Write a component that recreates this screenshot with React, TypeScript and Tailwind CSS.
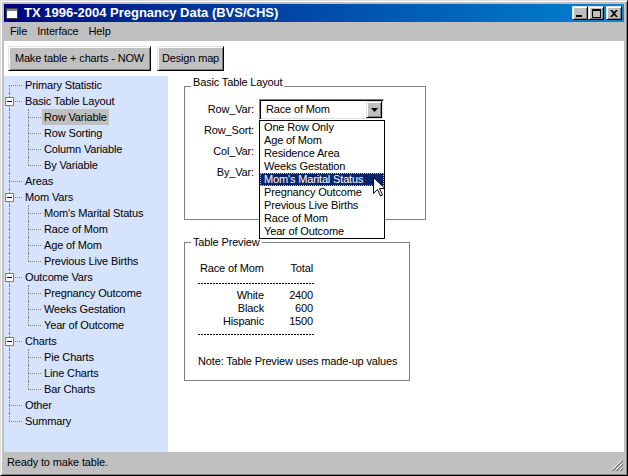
import React from 'react'

type TreeItem = {
  label: string
  level: 0 | 1
  open?: boolean
  last?: boolean
  selected?: boolean
}

const tree: TreeItem[] = [
  { label: 'Primary Statistic', level: 0 },
  { label: 'Basic Table Layout', level: 0, open: true },
  { label: 'Row Variable', level: 1, selected: true },
  { label: 'Row Sorting', level: 1 },
  { label: 'Column Variable', level: 1 },
  { label: 'By Variable', level: 1, last: true },
  { label: 'Areas', level: 0 },
  { label: 'Mom Vars', level: 0, open: true },
  { label: "Mom's Marital Status", level: 1 },
  { label: 'Race of Mom', level: 1 },
  { label: 'Age of Mom', level: 1 },
  { label: 'Previous Live Births', level: 1, last: true },
  { label: 'Outcome Vars', level: 0, open: true },
  { label: 'Pregnancy Outcome', level: 1 },
  { label: 'Weeks Gestation', level: 1 },
  { label: 'Year of Outcome', level: 1, last: true },
  { label: 'Charts', level: 0, open: true },
  { label: 'Pie Charts', level: 1 },
  { label: 'Line Charts', level: 1 },
  { label: 'Bar Charts', level: 1, last: true },
  { label: 'Other', level: 0 },
  { label: 'Summary', level: 0, last: true },
]

const listItems = [
  'One Row Only',
  'Age of Mom',
  'Residence Area',
  'Weeks Gestation',
  "Mom's Marital Status",
  'Pregnancy Outcome',
  'Previous Live Births',
  'Race of Mom',
  'Year of Outcome',
]

const preview = [
  { name: 'White', total: '2400' },
  { name: 'Black', total: '600' },
  { name: 'Hispanic', total: '1500' },
]

const raised =
  'border border-t-[#dfdfdf] border-l-[#dfdfdf] border-r-black border-b-black shadow-[inset_1px_1px_0_#fff,inset_-1px_-1px_0_#808080]'
const sunken =
  'border border-t-[#808080] border-l-[#808080] border-r-white border-b-white shadow-[inset_1px_1px_0_#000,inset_-1px_-1px_0_#dfdfdf]'

const dashed =
  'h-[1px] w-[117px] bg-[repeating-linear-gradient(to_right,#000_0_2px,transparent_2px_3px)]'

const Combo = ({ value }: { value: string }) => (
  <div className={`flex h-[21px] w-[125px] bg-white p-[1px] ${sunken}`}>
    <div className="flex-1 truncate pl-[5px] leading-[17px]">{value}</div>
    <div className={`flex h-[17px] w-[16px] items-center justify-center bg-[#c0c0c0] ${raised}`}>
      <svg width="7" height="4" viewBox="0 0 7 4">
        <path d="M0 0h7L3.5 4z" fill="#000" />
      </svg>
    </div>
  </div>
)

const TreeRow = ({ item, first }: { item: TreeItem; first: boolean }) => (
  <div className="flex h-[16px] items-stretch">
    <div className="relative w-[18px] shrink-0">
      {(item.level === 1 || !first) && (
        <div className="absolute top-0 left-[5px] h-[8px] border-l border-dotted border-[#808080]" />
      )}
      {(item.level === 1 || !item.last) && (
        <div className="absolute top-[8px] left-[5px] h-[8px] border-l border-dotted border-[#808080]" />
      )}
      {item.level === 0 && (
        <div className="absolute top-[8px] right-0 left-[5px] border-t border-dotted border-[#808080]" />
      )}
      {item.open && (
        <div className="absolute top-[4px] left-[1px] flex h-[9px] w-[9px] items-center justify-center border border-[#808080] bg-white">
          <div className="h-[1px] w-[5px] bg-black" />
        </div>
      )}
    </div>
    {item.level === 1 && (
      <div className="relative w-[19px] shrink-0">
        <div className="absolute top-0 left-[6px] h-[8px] border-l border-dotted border-[#808080]" />
        {!item.last && (
          <div className="absolute top-[8px] left-[6px] h-[8px] border-l border-dotted border-[#808080]" />
        )}
        <div className="absolute top-[8px] right-0 left-[6px] border-t border-dotted border-[#808080]" />
      </div>
    )}
    <span
      className={`ml-[1px] px-[2px] leading-[16px] whitespace-nowrap ${
        item.selected ? 'bg-[#c0c0c0]' : ''
      }`}
    >
      {item.label}
    </span>
  </div>
)

const App = () => {
  return (
    <div
      className={`flex h-[476px] w-[628px] flex-col overflow-hidden bg-[#c0c0c0] p-[3px] font-['Liberation_Sans',Arial,sans-serif] text-[11px] tracking-[-0.15px] text-black ${raised}`}
    >
      {/* title bar */}
      <div className="flex h-[18px] shrink-0 items-center bg-gradient-to-r from-[#000080] to-[#1084d0] px-[2px]">
        <svg width="12" height="11" viewBox="0 0 12 11" className="shrink-0">
          <rect x="0.5" y="0.5" width="11" height="10" fill="#fff" stroke="#404040" />
          <rect x="1" y="1" width="10" height="2" fill="#808080" />
        </svg>
        <div className="ml-[6px] flex-1 text-[13px] leading-[18px] font-bold tracking-normal text-white">
          TX 1996-2004 Pregnancy Data (BVS/CHS)
        </div>
        <div className="flex items-center">
          <div className={`flex h-[14px] w-[16px] items-end bg-[#c0c0c0] pb-[2px] pl-[3px] ${raised}`}>
            <div className="h-[2px] w-[6px] bg-black" />
          </div>
          <div className={`flex h-[14px] w-[16px] items-center justify-center bg-[#c0c0c0] ${raised}`}>
            <div className="h-[9px] w-[9px] border border-t-2 border-black" />
          </div>
          <div className={`ml-[2px] flex h-[14px] w-[16px] items-center justify-center bg-[#c0c0c0] ${raised}`}>
            <svg width="8" height="7" viewBox="0 0 8 7">
              <path d="M0 0h2l2 2 2-2h2L5 3.5 8 7H6L4 5 2 7H0l3-3.5z" fill="#000" />
            </svg>
          </div>
        </div>
      </div>

      {/* menu bar */}
      <div className="flex h-[19px] shrink-0 items-center pl-[1px]">
        {['File', 'Interface', 'Help'].map((m) => (
          <div key={m} className="px-[5px] leading-[19px]">
            {m}
          </div>
        ))}
      </div>

      {/* client */}
      <div className="flex min-h-0 flex-1 flex-col bg-white">
        <div className="flex h-[35px] shrink-0 gap-[6px] pt-[5px] pl-[4px]">
          <div className={`flex h-[25px] w-[143px] items-center justify-center bg-[#c0c0c0] ${raised}`}>
            Make table + charts - NOW
          </div>
          <div className={`flex h-[25px] w-[67px] items-center justify-center bg-[#c0c0c0] ${raised}`}>
            Design map
          </div>
        </div>

        <div className="flex min-h-0 flex-1">
          {/* tree */}
          <div className="w-[164px] shrink-0 bg-[#d6e3fc] pt-[1px]">
            {tree.map((item, i) => (
              <TreeRow key={item.label + i} item={item} first={i === 0} />
            ))}
          </div>

          {/* settings */}
          <div className="flex-1 pl-[16px]">
            <fieldset className="h-[144px] w-[242px] border border-[#808080] px-[6px]">
              <legend className="px-[2px] pb-[8px] leading-[13px]">Basic Table Layout</legend>
              <div className="grid grid-cols-[63px_125px] gap-x-[5px] pt-[2px]">
                {['Row_Var:', 'Row_Sort:', 'Col_Var:', 'By_Var:'].map((label, i) => (
                  <React.Fragment key={label}>
                    <div className="text-right leading-[21px]">{label}</div>
                    <div className="relative">
                      <Combo value={i === 0 ? 'Race of Mom' : ''} />
                      {i === 0 && (
                        <div className="absolute top-full left-0 z-10 w-[126px] border border-black bg-white">
                          {listItems.map((li) => (
                            <div
                              key={li}
                              className={`h-[13px] pl-[4px] leading-[13px] whitespace-nowrap ${
                                li === "Mom's Marital Status"
                                  ? 'bg-[#0a246a] text-white outline outline-1 -outline-offset-1 outline-dotted outline-[#c8c080]'
                                  : ''
                              }`}
                            >
                              {li}
                            </div>
                          ))}
                          <svg
                            width="13"
                            height="20"
                            viewBox="0 0 13 20"
                            className="absolute top-[56px] left-[113px]"
                          >
                            <path
                              d="M0.5 0.5v16l4-4 3 6.5 2-1-3-6.5h5.5z"
                              fill="#fff"
                              stroke="#000"
                              strokeWidth="1"
                            />
                          </svg>
                        </div>
                      )}
                    </div>
                  </React.Fragment>
                ))}
              </div>
            </fieldset>

            <fieldset className="mt-[16px] h-[145px] w-[226px] border border-[#808080] px-[6px]">
              <legend className="px-[2px] leading-[13px]">Table Preview</legend>
              <div className="ml-[7px] pt-[13px]">
                <div className="grid grid-cols-[66px_49px] leading-[13px] whitespace-nowrap">
                  <div className="pl-[2px]">Race of Mom</div>
                  <div className="text-right">Total</div>
                </div>
                <div className={`mt-[8px] ${dashed}`} />
                <div className="mt-[5px] grid grid-cols-[66px_49px] leading-[13px]">
                  {preview.map((r) => (
                    <React.Fragment key={r.name}>
                      <div className="text-right">{r.name}</div>
                      <div className="text-right">{r.total}</div>
                    </React.Fragment>
                  ))}
                </div>
                <div className={`mt-[6px] ${dashed}`} />
                <div className="mt-[20px] leading-[13px] whitespace-nowrap">
                  Note: Table Preview uses made-up values
                </div>
              </div>
            </fieldset>
          </div>
        </div>
      </div>

      {/* status bar */}
      <div className="flex h-[20px] shrink-0 items-center justify-between pl-[3px]">
        <span>Ready to make table.</span>
        <svg width="12" height="12" viewBox="0 0 12 12" className="mt-[6px] mr-[1px]">
          <path d="M11 1L1 11M11 5L5 11M11 9L9 11" stroke="#fff" strokeWidth="1" />
          <path d="M12 1L1 12M12 2L2 12M12 5L5 12M12 6L6 12M12 9L9 12M12 10L10 12" stroke="#808080" strokeWidth="1" />
        </svg>
      </div>
    </div>
  )
}

export default App
